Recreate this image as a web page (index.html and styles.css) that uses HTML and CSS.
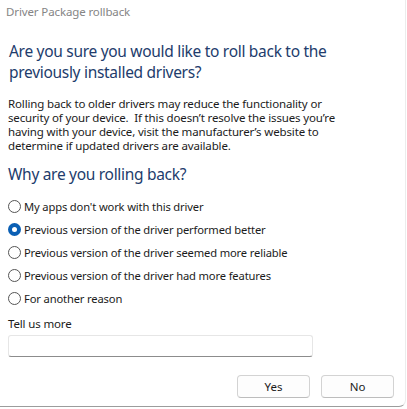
FILE: index.html
```html
<!DOCTYPE html>
<html lang="en">
<head>
<meta charset="utf-8">
<title>Driver Package rollback</title>
<link rel="stylesheet" href="styles.css">
</head>
<body>
<div class="window">
  <div class="titlebar">Driver Package rollback</div>
  <div class="content">
    <h1 class="instruction">Are you sure you would like to roll back to the<br>previously installed drivers?</h1>
    <p class="desc">Rolling back to older drivers may reduce the functionality or<br>security of your device.&nbsp; If this doesn’t resolve the issues you’re<br>having with your device, visit the manufacturer’s website to<br>determine if updated drivers are available.</p>
    <h2 class="section">Why are you rolling back?</h2>
    <ul class="options">
      <li class="option"><span class="radio"></span>My apps don't work with this driver</li>
      <li class="option"><span class="radio checked"></span>Previous version of the driver performed better</li>
      <li class="option"><span class="radio"></span>Previous version of the driver seemed more reliable</li>
      <li class="option"><span class="radio"></span>Previous version of the driver had more features</li>
      <li class="option"><span class="radio"></span>For another reason</li>
    </ul>
    <div class="field-label">Tell us more</div>
    <div class="textbox"></div>
  </div>
  <div class="buttons">
    <button class="btn">Yes</button>
    <button class="btn">No</button>
  </div>
</div>
</body>
</html>
```
FILE: styles.css
```css
html, body {
  margin: 0;
  padding: 0;
  background: #ffffff;
}
body {
  font-family: "Noto Sans", "Open Sans", sans-serif;
  color: #1b1b1b;
}
.window {
  width: 406px;
  height: 407px;
  box-sizing: border-box;
  border-bottom: 1px solid #9c9c9c;
  border-right: 1px solid #ececec;
  border-bottom-right-radius: 7px;
  display: flex;
  flex-direction: column;
}
.titlebar {
  font-size: 11.5px;
  letter-spacing: -0.12px;
  line-height: 16px;
  padding: 4px 0 0 6px;
  color: #858585;
}
.content {
  padding: 0 8px;
  display: flex;
  flex-direction: column;
}
.instruction {
  margin: 21px 0 0 1px;
  font-size: 15.5px;
  letter-spacing: -0.3px;
  line-height: 21px;
  font-weight: normal;
  color: #223c6c;
}
.desc {
  margin: 13.5px 0 0 0;
  font-size: 11.5px;
  letter-spacing: -0.15px;
  line-height: 14.3px;
}
.section {
  margin: 10.5px 0 0 0;
  font-size: 15.5px;
  letter-spacing: -0.3px;
  line-height: 21px;
  font-weight: normal;
  color: #223c6c;
}
.options {
  list-style: none;
  margin: 10px 0 0 0;
  padding: 0;
}
.option {
  display: flex;
  align-items: center;
  height: 23px;
  font-size: 11.2px;
  letter-spacing: -0.15px;
}
.radio {
  width: 13px;
  height: 13px;
  box-sizing: border-box;
  border: 1px solid #555555;
  border-radius: 50%;
  margin-right: 3px;
  flex: none;
  display: flex;
  align-items: center;
  justify-content: center;
}
.radio.checked {
  border: none;
  background: #0a5fb4;
}
.radio.checked::after {
  content: "";
  width: 5px;
  height: 5px;
  border-radius: 50%;
  background: #ffffff;
}
.field-label {
  margin-top: 6px;
  font-size: 11.5px;
  letter-spacing: -0.15px;
  line-height: 16px;
}
.textbox {
  margin-top: 2.5px;
  width: 305px;
  height: 22px;
  box-sizing: border-box;
  border: 1px solid #e6e6e6;
  border-bottom: 1px solid #8c8c8c;
  border-radius: 3px;
}
.buttons {
  display: flex;
  justify-content: flex-end;
  gap: 11px;
  padding: 18px 11px 0 0;
}
.btn {
  width: 73px;
  height: 23px;
  box-sizing: border-box;
  border: 1px solid #d3d3d3;
  border-bottom-color: #bdbdbd;
  border-radius: 4px;
  background: #fdfdfd;
  font-family: "Noto Sans", "Open Sans", sans-serif;
  font-size: 11.5px;
  color: #1b1b1b;
  padding: 0;
}
```
